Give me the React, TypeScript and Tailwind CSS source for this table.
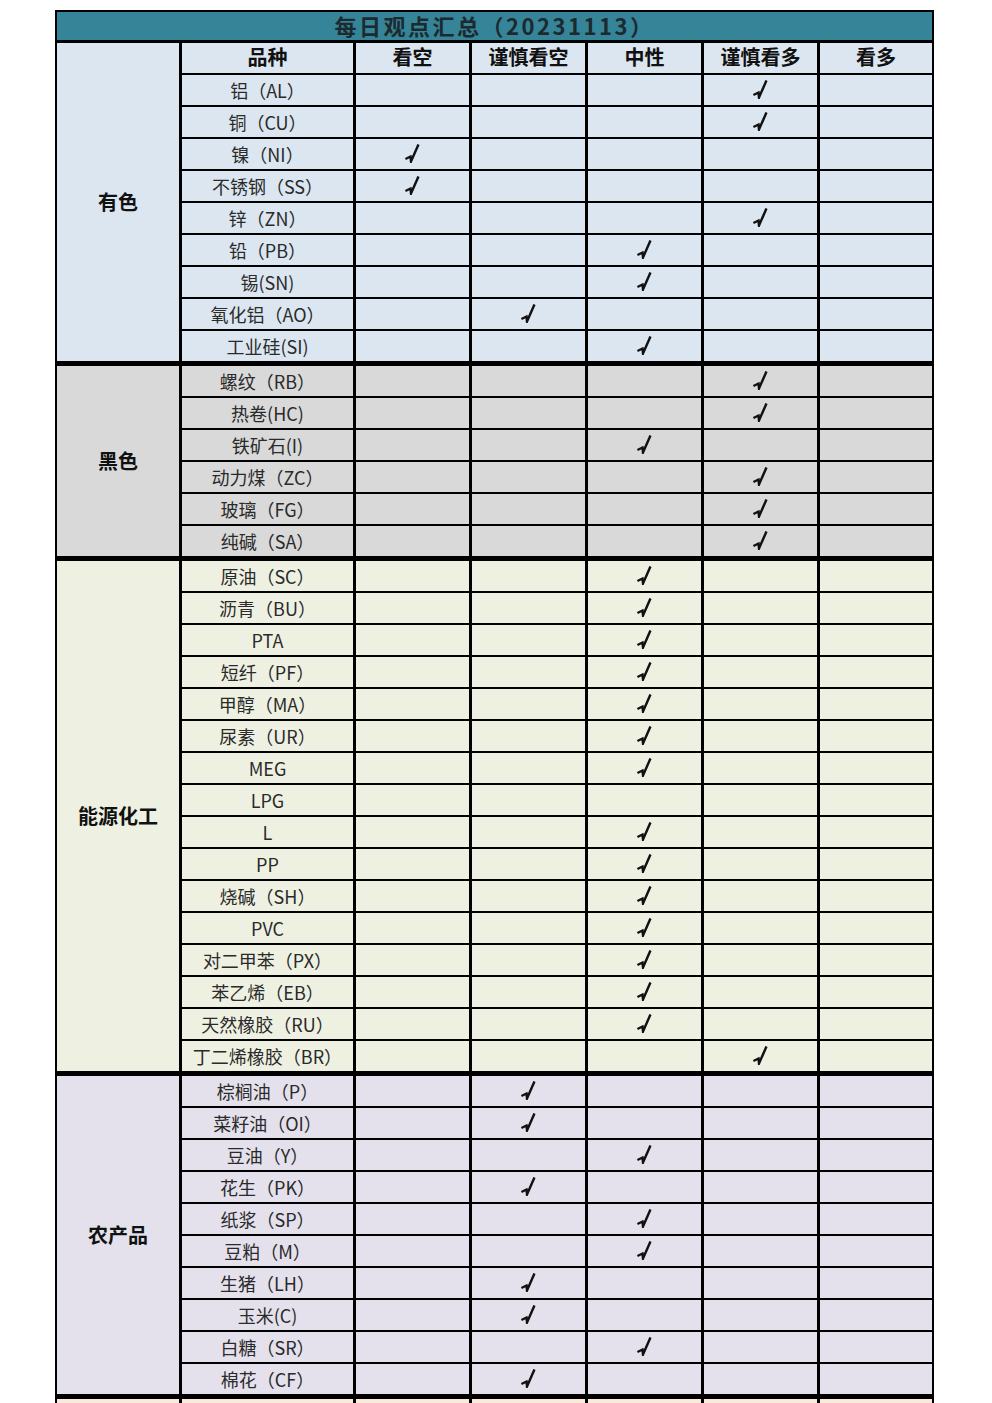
import React from "react";

type Row = { name: string; mark: number | null };
type Section = { label: string; bg: string; rows: Row[]; header?: boolean };

const Check = () => (
  <svg width="16" height="19" viewBox="0 0 16 19" className="block">
    <path
      d="M1.5 14.5 L5.5 12.5 L6 17.5 L13 1.5"
      fill="none"
      stroke="#111"
      strokeWidth="2.4"
      strokeLinejoin="miter"
      strokeLinecap="square"
    />
  </svg>
);

const sections: Section[] = [
  {
    label: "有色",
    bg: "bg-[#dce6f0]",
    header: true,
    rows: [
      { name: "铝（AL）", mark: 3 },
      { name: "铜（CU）", mark: 3 },
      { name: "镍（NI）", mark: 0 },
      { name: "不锈钢（SS）", mark: 0 },
      { name: "锌（ZN）", mark: 3 },
      { name: "铅（PB）", mark: 2 },
      { name: "锡(SN)", mark: 2 },
      { name: "氧化铝（AO）", mark: 1 },
      { name: "工业硅(SI)", mark: 2 },
    ],
  },
  {
    label: "黑色",
    bg: "bg-[#d9d9d9]",
    rows: [
      { name: "螺纹（RB）", mark: 3 },
      { name: "热卷(HC)", mark: 3 },
      { name: "铁矿石(I)", mark: 2 },
      { name: "动力煤（ZC）", mark: 3 },
      { name: "玻璃（FG）", mark: 3 },
      { name: "纯碱（SA）", mark: 3 },
    ],
  },
  {
    label: "能源化工",
    bg: "bg-[#eef1e2]",
    rows: [
      { name: "原油（SC）", mark: 2 },
      { name: "沥青（BU）", mark: 2 },
      { name: "PTA", mark: 2 },
      { name: "短纤（PF）", mark: 2 },
      { name: "甲醇（MA）", mark: 2 },
      { name: "尿素（UR）", mark: 2 },
      { name: "MEG", mark: 2 },
      { name: "LPG", mark: null },
      { name: "L", mark: 2 },
      { name: "PP", mark: 2 },
      { name: "烧碱（SH）", mark: 2 },
      { name: "PVC", mark: 2 },
      { name: "对二甲苯（PX）", mark: 2 },
      { name: "苯乙烯（EB）", mark: 2 },
      { name: "天然橡胶（RU）", mark: 2 },
      { name: "丁二烯橡胶（BR）", mark: 3 },
    ],
  },
  {
    label: "农产品",
    bg: "bg-[#e4e1ed]",
    rows: [
      { name: "棕榈油（P）", mark: 1 },
      { name: "菜籽油（OI）", mark: 1 },
      { name: "豆油（Y）", mark: 2 },
      { name: "花生（PK）", mark: 1 },
      { name: "纸浆（SP）", mark: 2 },
      { name: "豆粕（M）", mark: 2 },
      { name: "生猪（LH）", mark: 1 },
      { name: "玉米(C)", mark: 1 },
      { name: "白糖（SR）", mark: 2 },
      { name: "棉花（CF）", mark: 1 },
    ],
  },
  {
    label: "软商品",
    bg: "bg-[#fce9d9]",
    rows: [
      { name: "苹果期货（AP）", mark: 2 },
      { name: "红枣（CJ）", mark: 2 },
    ],
  },
];

const headers = ["品种", "看空", "谨慎看空", "中性", "谨慎看多", "看多"];
const rowGrid = "grid grid-cols-[171px_113px_113px_113px_113px_112px] gap-x-[3px]";

function SectionBlock({ s, first }: { s: Section; first: boolean }) {
  return (
    <div className={`flex gap-x-[3px] ${first ? "mt-[3px]" : "mt-[5px]"}`}>
      <div
        className={`${s.bg} w-[122px] shrink-0 flex items-center justify-center text-[20px] font-bold text-[#111]`}
      >
        {s.label}
      </div>
      <div className="flex flex-col gap-y-[2px]">
        {s.header && (
          <div className={`${rowGrid} h-[30px]`}>
            {headers.map((h) => (
              <div
                key={h}
                className={`${s.bg} flex items-center justify-center text-[20px] font-bold text-[#111] leading-none pb-[2px]`}
              >
                {h}
              </div>
            ))}
          </div>
        )}
        {s.rows.map((r) => (
          <div key={r.name} className={`${rowGrid} h-[30px]`}>
            <div
              className={`${s.bg} flex items-center justify-center text-[18px] text-[#2a2a2a] leading-none whitespace-nowrap pb-[1px]`}
            >
              {r.name}
            </div>
            {[0, 1, 2, 3, 4].map((c) => (
              <div key={c} className={`${s.bg} flex items-center justify-center pb-[2px]`}>
                {r.mark === c ? <Check /> : null}
              </div>
            ))}
          </div>
        ))}
      </div>
    </div>
  );
}

export default function App() {
  return (
    <div
      className="w-[992px] h-[1403px] overflow-hidden bg-white"
      style={{ fontFamily: '"Noto Sans CJK SC", "Noto Sans", sans-serif' }}
    >
      <div className="ml-[55px] mt-[10px] w-[879px] bg-black p-[2px] flex flex-col">
        <div className="h-[28px] bg-[#358497] flex items-center justify-center text-[22px] font-bold tracking-[2.5px] text-[#1c2a30] leading-none pb-[2px]">
          每日观点汇总（20231113）
        </div>
        {sections.map((s, i) => (
          <SectionBlock key={s.label} s={s} first={i === 0} />
        ))}
      </div>
    </div>
  );
}
